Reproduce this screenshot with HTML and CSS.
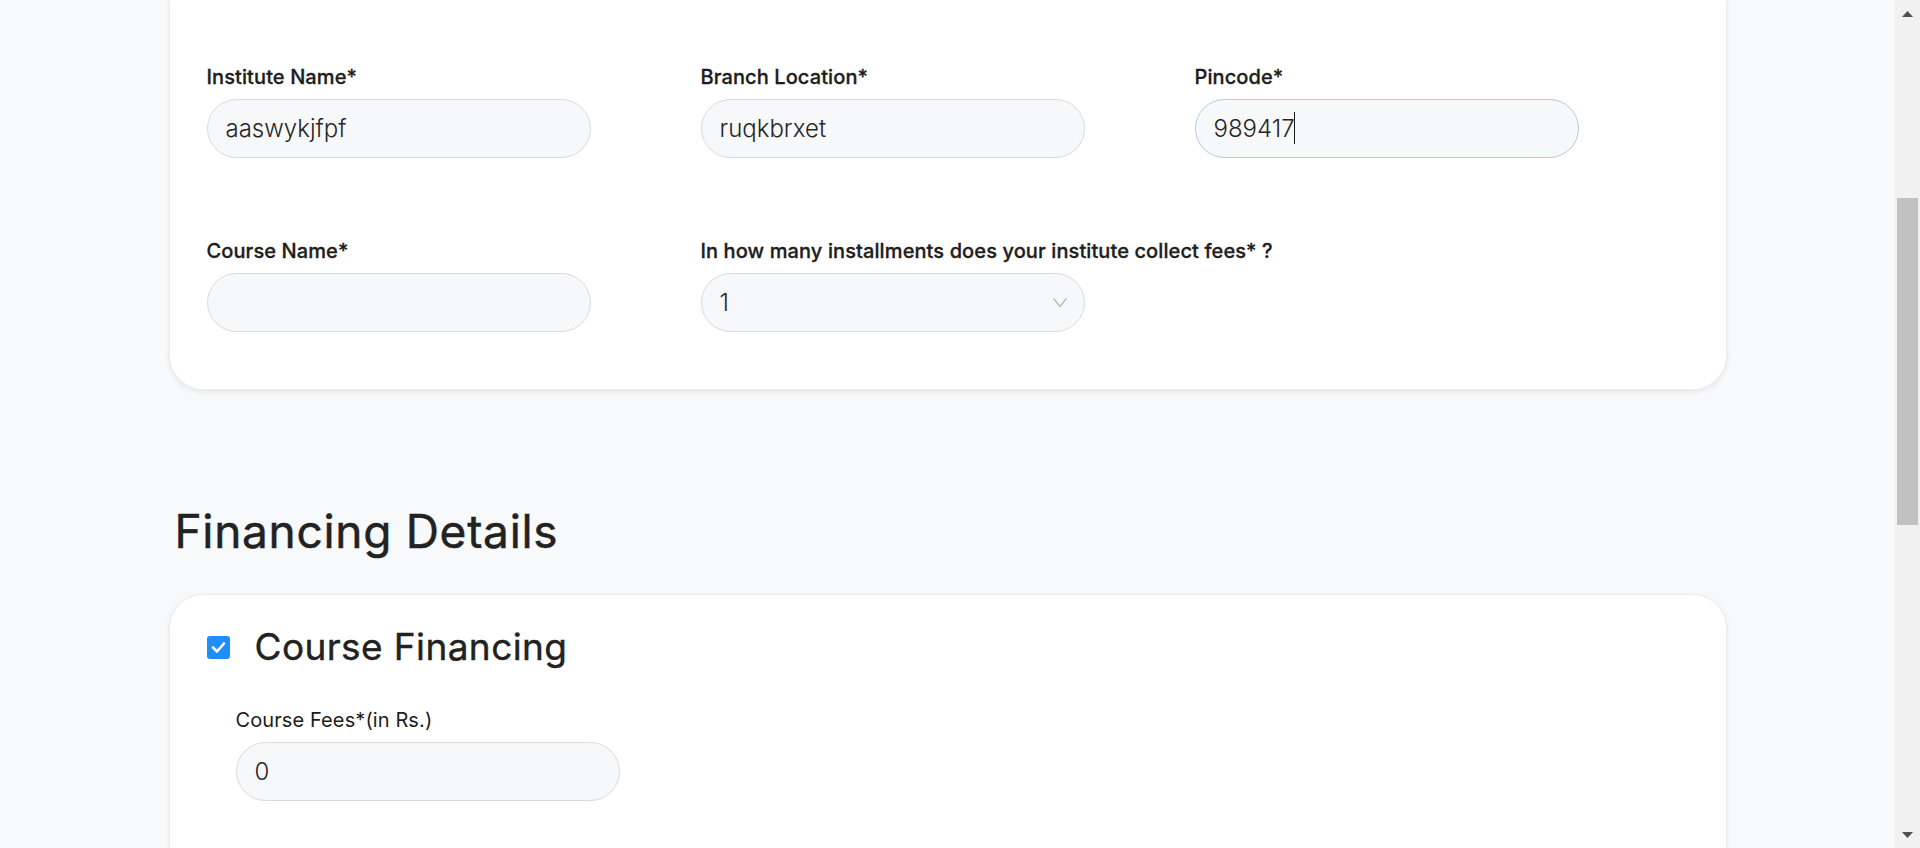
FILE: index.html
```html
<!DOCTYPE html>
<html lang="en">
<head>
<meta charset="utf-8">
<title>Application Form</title>
<link rel="stylesheet" href="styles.css">
</head>
<body>
<div class="viewport">
  <main class="page">
    <section class="section">
      <div class="card card-grid card-cut">
        <div class="field"><label class="label">Institute Name*</label><input class="input" type="text" value="aaswykjfpf"></div>
        <div class="field"><label class="label">Branch Location*</label><input class="input" type="text" value="ruqkbrxet"></div>
        <div class="field"><label class="label">Pincode*</label>
          <div class="input-wrap">
            <input class="input input-focus" type="text" value="989417">
            <span class="caret"></span>
          </div>
        </div>

        <div class="field"><label class="label">Course Name*</label><input class="input" type="text" value=""></div>
        <div class="field"><label class="label label-wide">In how many installments does your institute collect fees* ?</label>
          <div class="input-wrap">
            <select class="input select"><option>1</option><option>2</option><option>3</option></select>
            <svg class="chevron" width="16" height="11" viewBox="0 0 16 11"><polyline points="1.5,1.5 8,9.5 14.5,1.5" fill="none" stroke="#b3b3b3" stroke-width="1.2"/></svg>
          </div>
        </div>
      </div>
    </section>

    <section class="section">
      <h2 class="section-title">Financing Details</h2>
      <div class="card card-finance">
        <div class="finance-head">
          <span class="check"><svg width="23" height="23" viewBox="0 0 23 23"><rect width="23" height="23" rx="3" fill="#1f8efa"/><polyline points="6,11.5 10,15.5 17,7.5" fill="none" stroke="#fff" stroke-width="2.6" stroke-linecap="round" stroke-linejoin="round"/></svg></span>
          <h3 class="finance-title">Course Financing</h3>
        </div>
        <div class="finance-fields">
          <div class="field"><label class="label label-light">Course Fees*(in Rs.)</label><input class="input" type="text" value="0"></div>
        </div>
      </div>
    </section>
  </main>
</div>
<div class="scrollbar">
  <div class="sb-btn"><svg width="11" height="6" viewBox="0 0 11 6"><polygon points="0,6 5.5,0 11,6" fill="#505050"/></svg></div>
  <div class="sb-track"><div class="sb-thumb"></div></div>
  <div class="sb-btn"><svg width="11" height="6" viewBox="0 0 11 6"><polygon points="0,0 5.5,6 11,0" fill="#505050"/></svg></div>
</div>
</body>
</html>
```
FILE: styles.css
```css
html, body {
  height: 100%;
}
body {
  margin: 0;
  display: flex;
  overflow: hidden;
  background: #f8f9fb;
  font-family: Inter, "Liberation Sans", sans-serif;
  color: #1e1e1e;
}
.viewport {
  flex: 1;
  min-width: 0;
  height: 100vh;
  overflow: hidden;
}
.scrollbar {
  flex: none;
  width: 25px;
  height: 100vh;
  background: #f1f1f1;
  display: flex;
  flex-direction: column;
}
.sb-btn {
  height: 27px;
  display: flex;
  align-items: center;
  justify-content: center;
}
.sb-btn svg {
  display: block;
}
.sb-track {
  flex: 1;
  padding: 171px 2px 0;
}
.sb-thumb {
  height: 327px;
  background: #c1c1c1;
}

.page {
  width: 1558px;
  margin: 0 auto;
}
.section + .section {
  margin-top: 107px;
}
.section-title {
  margin: 0 0 29px 6px;
  font-size: 46px;
  line-height: 68px;
  font-weight: 400;
  letter-spacing: 0.7px;
  -webkit-text-stroke: 0.5px #222;
  color: #222;
}
.card {
  background: #fff;
  border: 1px solid #ececec;
  border-radius: 34px;
  box-shadow: 0 2px 5px rgba(0, 0, 0, 0.08);
}
.card-cut {
  border-top: 0;
  border-radius: 0 0 34px 34px;
}
.card-grid {
  display: grid;
  grid-template-columns: repeat(3, minmax(0, 1fr));
  row-gap: 81px;
  padding: 65px 37px 57px;
}
.field {
  display: flex;
  flex-direction: column;
  align-items: flex-start;
}
.label {
  display: block;
  font-size: 20px;
  line-height: 24px;
  font-weight: 500;
  letter-spacing: 0.1px;
  -webkit-text-stroke: 0.3px #1d1d1d;
  margin-bottom: 10px;
  white-space: nowrap;
  color: #1d1d1d;
}
.label-light {
  font-weight: 400;
  -webkit-text-stroke: 0;
}
.input {
  width: 384px;
  height: 59px;
  box-sizing: border-box;
  border: 1px solid #dadada;
  border-radius: 30px;
  background: #f7f8fa;
  padding: 0 18px;
  font-family: Inter, "Liberation Sans", sans-serif;
  font-size: 24px;
  font-weight: 300;
  color: #262626;
  outline: none;
}
.input-focus {
  border-color: #b3cbe2;
}
.input-wrap {
  position: relative;
  width: 384px;
}
.input-wrap .input {
  display: block;
}
.caret {
  position: absolute;
  left: 99px;
  top: 13px;
  width: 1px;
  height: 32px;
  background: #1a1a1a;
}
.select {
  appearance: none;
  -webkit-appearance: none;
}
.chevron {
  position: absolute;
  right: 17px;
  top: 24px;
  pointer-events: none;
}
.card-finance {
  padding: 30px 37px 80px;
}
.finance-head {
  display: flex;
  align-items: center;
  gap: 25px;
  height: 44px;
}
.check {
  display: block;
  width: 23px;
  height: 23px;
}
.check svg {
  display: block;
}
.finance-title {
  margin: 0;
  font-size: 37px;
  line-height: 44px;
  font-weight: 400;
  letter-spacing: 0.4px;
  -webkit-text-stroke: 0.4px #222;
  color: #222;
}
.finance-fields {
  margin-top: 39px;
  padding-left: 29px;
}
```
